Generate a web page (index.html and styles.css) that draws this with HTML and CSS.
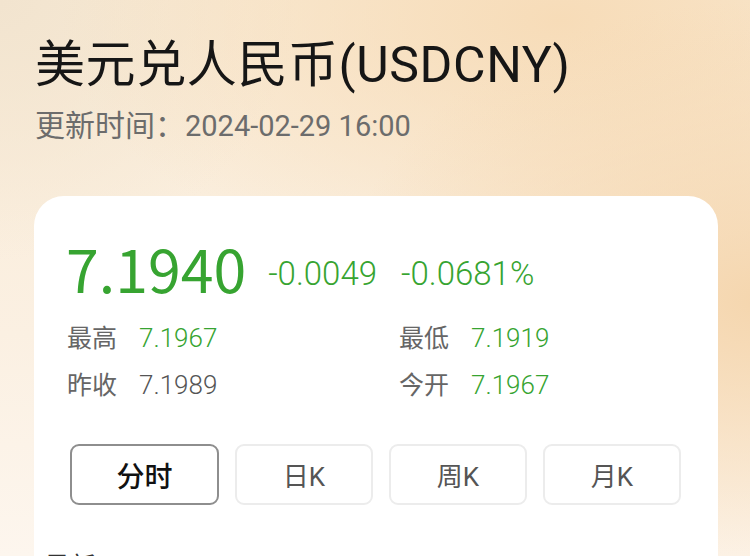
FILE: index.html
```html
<!DOCTYPE html>
<html lang="zh-CN">
<head>
<meta charset="utf-8">
<title>美元兑人民币(USDCNY)</title>
<link rel="stylesheet" href="styles.css">
</head>
<body>
<div class="page">
  <header class="head">
    <h1 class="title">美元兑人民币(USDCNY)</h1>
    <div class="updated">更新时间：<span class="num">2024-02-29 16:00</span></div>
  </header>
  <section class="card">
    <div class="quote">
      <span class="price">7.1940</span>
      <span class="chg">-0.0049</span>
      <span class="chg">-0.0681%</span>
    </div>
    <div class="stats">
      <div class="stat"><span class="lbl">最高</span><span class="val up">7.1967</span></div>
      <div class="stat"><span class="lbl">最低</span><span class="val up">7.1919</span></div>
      <div class="stat"><span class="lbl">昨收</span><span class="val">7.1989</span></div>
      <div class="stat"><span class="lbl">今开</span><span class="val up">7.1967</span></div>
    </div>
    <div class="tabs">
      <button class="tab active">分时</button>
      <button class="tab">日K</button>
      <button class="tab">周K</button>
      <button class="tab">月K</button>
    </div>
    <div class="latest">最新</div>
  </section>
</div>
</body>
</html>
```
FILE: styles.css
```css
html, body {
  margin: 0;
  padding: 0;
  height: 100%;
  overflow: hidden;
}
body {
  font-family: Roboto, "Noto Sans CJK SC", sans-serif;
  background:
    radial-gradient(ellipse 420px 300px at 760px 300px, #f5d6ae 0%, rgba(245,214,174,0) 100%),
    radial-gradient(ellipse 500px 260px at 560px 20px, #f7dcb8 0%, rgba(247,220,184,0) 100%),
    radial-gradient(ellipse 300px 260px at 0px 0px, #f2e4cf 0%, rgba(242,228,207,0) 100%),
    linear-gradient(180deg, #f9ebd6 0%, #fbf0e2 60%, #fdf6ee 100%);
}
.page {
  padding: 34px 32px 0 34px;
}
.head {
  padding-left: 1px;
}
.title {
  margin: 0;
  font-size: 50px;
  line-height: 62px;
  font-weight: 400;
  color: #161616;
  letter-spacing: 0.6px;
}
.updated {
  margin-top: 12px;
  font-size: 30px;
  line-height: 36px;
  color: #6c6c6c;
}
.updated .num {
  font-size: 29px;
}
.card {
  margin-top: 52px;
  background: #fff;
  border-radius: 30px 30px 0 0;
  padding: 39px 32px 0 32px;
  height: 400px;
}
.quote {
  display: flex;
  align-items: flex-end;
  color: #37a431;
}
.price {
  font-family: "Noto Sans CJK SC", sans-serif;
  font-size: 59px;
  line-height: 66px;
  margin-right: 22px;
}
.chg {
  font-size: 33px;
  line-height: 40px;
  padding-bottom: 7px;
  margin-right: 24px;
  font-weight: 300;
}
.stats {
  display: grid;
  grid-template-columns: 332px 1fr;
  row-gap: 14px;
  margin-top: 21px;
}
.stat {
  display: flex;
  align-items: baseline;
  font-size: 25px;
  line-height: 33px;
}
.lbl {
  color: #666;
  width: 72px;
  padding-left: 1px;
}
.val {
  color: #555;
  font-size: 26px;
  font-weight: 300;
}
.val.up {
  color: #37a431;
}
.tabs {
  display: flex;
  gap: 16px;
  margin-top: 42px;
  margin-left: 4px;
}
.tab {
  width: 138px;
  height: 61px;
  box-sizing: border-box;
  border: 2px solid #ececec;
  border-radius: 9px;
  background: #fff;
  font-family: Roboto, "Noto Sans CJK SC", sans-serif;
  font-size: 26px;
  color: #555;
  padding: 0;
}
.tab.active {
  width: 149px;
  border-color: #8e8e8e;
  color: #111;
  font-size: 28px;
  font-weight: 500;
}
.latest {
  margin-top: 47px;
  margin-left: -22px;
  font-size: 26px;
  line-height: 30px;
  color: #333;
}
```
